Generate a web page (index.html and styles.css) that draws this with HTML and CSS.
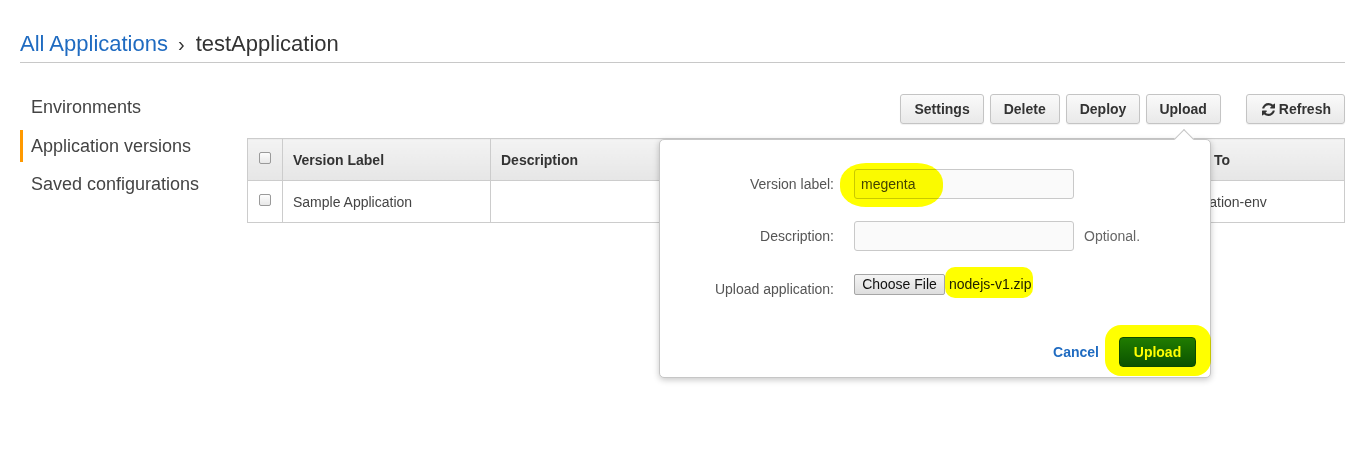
FILE: index.html
```html
<!DOCTYPE html>
<html>
<head>
<meta charset="utf-8">
<link rel="stylesheet" href="styles.css">
</head>
<body>
<div class="page">
  <div class="crumbs">
    <a class="crumb-link">All Applications</a><span class="crumb-sep">›</span><span class="crumb-cur">testApplication</span>
  </div>
  <div class="main">
    <nav class="side">
      <div class="side-item">Environments</div>
      <div class="side-item active">Application versions</div>
      <div class="side-item">Saved configurations</div>
    </nav>
    <section class="content">
      <div class="toolbar">
        <button class="btn">Settings</button>
        <button class="btn">Delete</button>
        <button class="btn">Deploy</button>
        <button class="btn btn-up">Upload</button>
        <button class="btn btn-refresh"><svg class="ico" viewBox="0 0 1536 1536"><path d="M1511 928q0 5-1 7-64 268-268 434.5t-478 166.5q-146 0-282.5-55t-243.5-157l-129 129q-19 19-45 19t-45-19-19-45v-448q0-26 19-45t45-19h448q26 0 45 19t19 45-19 45l-137 137q71 66 161 102t187 36q134 0 250-65t186-179q11-17 53-117 8-23 30-23h192q13 0 22.5 9.5t9.5 22.5zm25-800v448q0 26-19 45t-45 19h-448q-26 0-45-19t-19-45 19-45l138-138q-148-137-349-137-134 0-250 65t-186 179q-11 17-53 117-8 23-30 23h-199q-13 0-22.5-9.5t-9.5-22.5v-7q65-268 270-434.5t480-166.5q146 0 284 55.5t245 156.5l130-129q19-19 45-19t45 19 19 45z"/></svg>Refresh</button>
      </div>
      <table class="grid">
        <thead>
          <tr>
            <th class="c-cb"><span class="cb"></span></th>
            <th class="c-label">Version Label</th>
            <th class="c-desc">Description</th>
            <th class="c-date">Date Created</th>
            <th class="c-src">Source</th>
            <th class="c-dep">Deployed To</th>
          </tr>
        </thead>
        <tbody>
          <tr>
            <td class="c-cb"><span class="cb"></span></td>
            <td>Sample Application</td>
            <td></td>
            <td>2017-05-10 14:02</td>
            <td>—</td>
            <td>Testapplication-env</td>
          </tr>
        </tbody>
      </table>

      <div class="pop">
        <span class="pop-arrow"></span>
        <div class="form">
          <label class="f-label">Version label:</label>
          <div class="f-field"><div class="input">megenta</div></div>

          <label class="f-label">Description:</label>
          <div class="f-field"><div class="input"></div><span class="hint">Optional.</span></div>

          <label class="f-label f-label-file">Upload application:</label>
          <div class="f-field f-file"><span class="file-btn">Choose File</span><span class="file-name">nodejs-v1.zip</span></div>
        </div>
        <div class="pop-foot">
          <a class="cancel">Cancel</a>
          <button class="btn-go">Upload</button>
        </div>
        <span class="hl hl-label"></span>
        <span class="hl hl-file"></span>
        <span class="hl hl-go"></span>
      </div>
    </section>
  </div>
</div>
</body>
</html>
```
FILE: styles.css
```css
* { box-sizing: border-box; }
html, body { margin: 0; padding: 0; background: #fff; }
body {
  font-family: "Liberation Sans", Arial, sans-serif;
  color: #444;
  width: 1363px;
  height: 473px;
  overflow: hidden;
}
.page { padding: 0 18px 0 20px; }

.crumbs {
  height: 63px;
  padding-top: 31px;
  line-height: 25px;
  font-size: 22px;
  border-bottom: 1px solid #c8c8c8;
  white-space: nowrap;
}
.crumb-link { color: #1f6bc1; text-decoration: none; }
.crumb-sep { color: #333; font-size: 20px; line-height: 1; margin: 0 11px 0 10px; }
.crumb-cur { color: #333; }

.main { display: flex; }
.side { width: 227px; flex: none; padding-top: 28px; }
.side-item {
  font-size: 18px;
  line-height: 32px;
  height: 32px;
  padding-left: 8px;
  margin-bottom: 6.5px;
  color: #444;
  border-left: 3px solid transparent;
  white-space: nowrap;
}
.side-item.active { border-left-color: #f90; }

.content { flex: 1; position: relative; padding-top: 31px; }
.toolbar { display: flex; justify-content: flex-end; gap: 6px; height: 30px; }
.btn {
  height: 30px;
  padding: 0 13px;
  border: 1px solid #c4c4c4;
  border-radius: 3px;
  background: linear-gradient(#fafafa, #e9e9e9);
  box-shadow: 0 1px 1px rgba(0,0,0,.06);
  font-family: inherit;
  font-size: 14px;
  font-weight: bold;
  color: #333;
  display: flex;
  align-items: center;
  white-space: nowrap;
}
.btn-up { padding: 0 13px 0 12px; }
.btn-refresh { margin-left: 19px; padding: 0 13px 0 15px; }
.ico { width: 13px; height: 13px; fill: #333; margin-right: 4px; }

.grid {
  margin-top: 14px;
  width: 1098px;
  border-collapse: collapse;
  border: 1px solid #ccc;
  table-layout: fixed;
  font-size: 14px;
}
.grid th, .grid td {
  border-left: 1px solid #ccc;
  text-align: left;
  padding: 0 10px;
  white-space: nowrap;
  overflow: hidden;
}
.grid th {
  height: 42px;
  background: linear-gradient(#f3f3f3, #e6e6e6);
  color: #333;
  font-weight: bold;
  border-bottom: 1px solid #ccc;
}
.grid td { height: 42px; color: #444; }
.grid .c-cb { width: 35px; padding: 0 0 0 11px; }
.grid .c-label { width: 208px; }
.grid .c-desc { width: 300px; }
.grid .c-date { width: 200px; }
.grid .c-src { width: 146px; }
.cb {
  display: block;
  width: 12px;
  height: 12px;
  border: 1px solid #9a9a9a;
  border-radius: 2px;
  background: linear-gradient(#fdfdfd, #e8e8e8);
  margin-top: -4px;
}

.pop {
  position: absolute;
  left: 412px;
  top: 76px;
  width: 552px;
  height: 239px;
  background: #fff;
  border: 1px solid #c6c6c6;
  border-radius: 5px;
  box-shadow: 0 2px 6px rgba(0,0,0,.22);
  padding: 29px 14px 10px 0;
  display: flex;
  flex-direction: column;
}
.pop-arrow {
  position: absolute;
  left: 517px;
  top: -8px;
  width: 14px;
  height: 14px;
  background: #fff;
  border-top: 1px solid #c6c6c6;
  border-left: 1px solid #c6c6c6;
  transform: rotate(45deg);
}
.form {
  display: grid;
  grid-template-columns: 174px auto;
  column-gap: 20px;
  row-gap: 22px;
  font-size: 14px;
}
.f-label {
  color: #555;
  text-align: right;
  height: 30px;
  line-height: 30px;
}
.f-label-file { line-height: 32px; }
.f-field { display: flex; align-items: center; gap: 10px; height: 30px; }
.input {
  width: 220px;
  height: 30px;
  border: 1px solid #c9c9c9;
  border-radius: 3px;
  background: #fafafa;
  padding: 0 6px;
  line-height: 28px;
  color: #444;
}
.hint { color: #666; }
.f-file { align-items: flex-start; gap: 4px; }
.file-btn {
  margin-top: 1px;
  height: 21px;
  line-height: 19px;
  width: 91px;
  text-align: center;
  border: 1px solid #a6a6a6;
  border-radius: 2px;
  background: linear-gradient(#f4f4f4, #dedede);
  color: #111;
}
.file-name { margin-top: 1px; line-height: 21px; color: #222; }

.pop-foot {
  margin-top: auto;
  display: flex;
  justify-content: flex-end;
  align-items: center;
  gap: 20px;
}
.cancel { color: #1f6bc1; font-weight: bold; font-size: 14px; }
.btn-go {
  width: 77px;
  height: 30px;
  border: 1px solid #0d4a00;
  border-radius: 4px;
  background: linear-gradient(#207c00, #0b5300);
  color: #fff;
  font-family: inherit;
  font-size: 14px;
  font-weight: bold;
  padding: 0;
}

.hl {
  position: absolute;
  background: #ffff00;
  mix-blend-mode: multiply;
  pointer-events: none;
}
.hl-label { left: 180px; top: 23px; width: 103px; height: 44px; border-radius: 26px / 20px; }
.hl-file { left: 285px; top: 127px; width: 88px; height: 31px; border-radius: 10px; }
.hl-go { left: 445px; top: 185px; width: 106px; height: 51px; border-radius: 16px; }
```
